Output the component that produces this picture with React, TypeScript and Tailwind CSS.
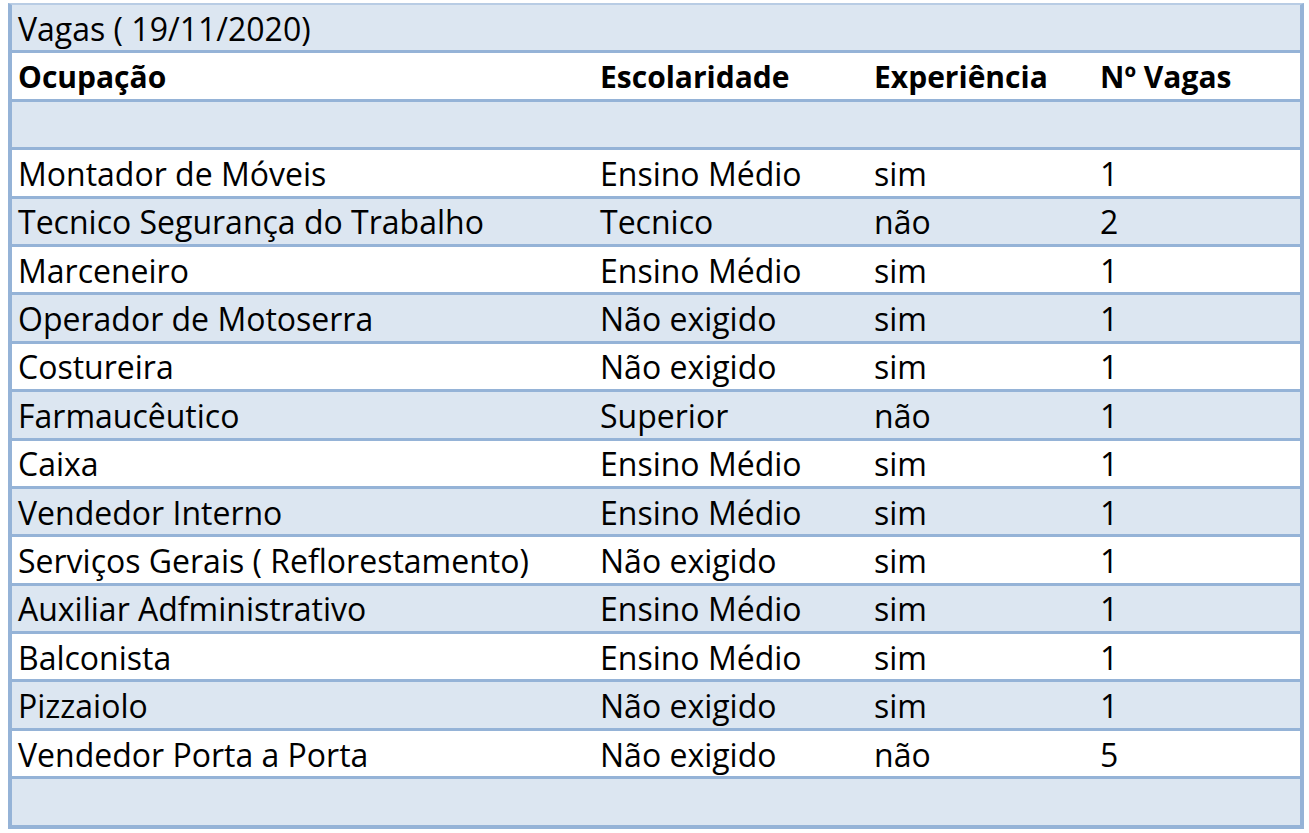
import React from "react";

const rows: [string, string, string, string][] = [
  ["Montador de Móveis", "Ensino Médio", "sim", "1"],
  ["Tecnico Segurança do Trabalho", "Tecnico", "não", "2"],
  ["Marceneiro", "Ensino Médio", "sim", "1"],
  ["Operador de Motoserra", "Não exigido", "sim", "1"],
  ["Costureira", "Não exigido", "sim", "1"],
  ["Farmaucêutico", "Superior", "não", "1"],
  ["Caixa", "Ensino Médio", "sim", "1"],
  ["Vendedor Interno", "Ensino Médio", "sim", "1"],
  ["Serviços Gerais ( Reflorestamento)", "Não exigido", "sim", "1"],
  ["Auxiliar Adfministrativo", "Ensino Médio", "sim", "1"],
  ["Balconista", "Ensino Médio", "sim", "1"],
  ["Pizzaiolo", "Não exigido", "sim", "1"],
  ["Vendedor Porta a Porta", "Não exigido", "não", "5"],
];

const grid = "grid grid-cols-[582px_274px_226px_1fr] items-center h-[48.4px] pl-[6px]";

function Row({ cells, blue, bold }: { cells: string[]; blue: boolean; bold?: boolean }) {
  return (
    <div
      className={`${grid} border-b-[3px] border-[#95b3d7] ${blue ? "bg-[#dce6f1]" : "bg-white"} ${bold ? "font-bold text-[30px]" : ""}`}
    >
      {cells.map((c, i) => (
        <div key={i} className="whitespace-nowrap pt-[2px]">
          {c}
        </div>
      ))}
    </div>
  );
}

export default function App() {
  return (
    <div
      className="w-[1309px] h-[833px] bg-white pt-[3px] pl-[8px] text-black text-[32px] leading-none"
      style={{ fontFamily: '"Open Sans", "Noto Sans", sans-serif' }}
    >
      <div className="w-[1296px] border-l-[4px] border-r-[4px] border-b-[4px] border-t-[2px] border-[#95b3d7] border-t-[#b8cce4]">
        <div className="h-[48.4px] border-b-[3px] border-[#95b3d7] bg-[#dce6f1] flex items-center pl-[6px] pt-[2px] whitespace-nowrap">
          Vagas ( 19/11/2020)
        </div>
        <Row cells={["Ocupação", "Escolaridade", "Experiência", "Nº Vagas"]} blue={false} bold />
        <Row cells={["", "", "", ""]} blue />
        {rows.map((r, i) => (
          <Row key={i} cells={r} blue={i % 2 === 1} />
        ))}
        <div className="h-[45.4px] bg-[#dce6f1]" />
      </div>
    </div>
  );
}
